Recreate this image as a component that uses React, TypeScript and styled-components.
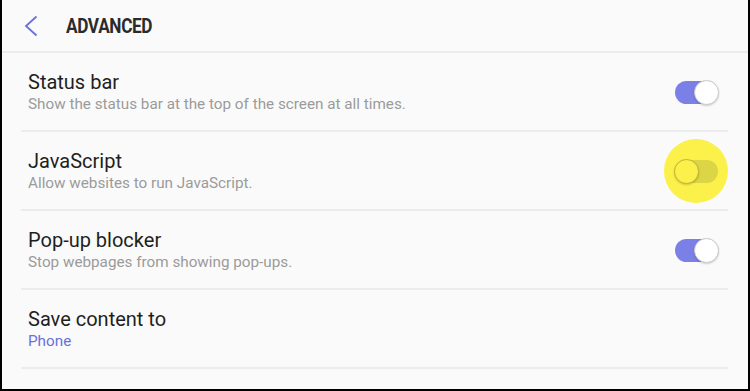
import styled, { createGlobalStyle } from "styled-components";

const GlobalStyle = createGlobalStyle`
  html, body {
    margin: 0;
    padding: 0;
    background: #ffffff;
  }
  * {
    box-sizing: border-box;
  }
`;

const Frame = styled.div`
  width: 750px;
  height: 391px;
  overflow: hidden;
  background-color: #fafafa;
  border-left: 2px solid #000;
  border-right: 2px solid #000;
  border-bottom: 2px solid #000;
  font-family: Roboto, "Noto Sans", sans-serif;
`;

const Header = styled.div`
  display: flex;
  align-items: center;
  height: 53px;
  padding-left: 21px;
  border-bottom: 2px solid #ececec;
`;

const BackButton = styled.button`
  display: flex;
  align-items: center;
  justify-content: center;
  width: 16px;
  height: 22px;
  padding: 0;
  margin: 0 27px 0 0;
  border: none;
  background: none;
`;

const Title = styled.h1`
  margin: 0;
  font-size: 20px;
  font-weight: 700;
  color: #2b2b2b;
  letter-spacing: -0.4px;
  transform: scaleX(0.86);
  transform-origin: left center;
`;

const List = styled.ul`
  list-style: none;
  margin: 0 20px 0 19px;
  padding: 0;
`;

const Row = styled.li`
  display: flex;
  align-items: center;
  justify-content: space-between;
  padding: 17px 10px 16px 7px;
  border-bottom: 2px solid #ececec;
`;

const Texts = styled.div`
  display: flex;
  flex-direction: column;
`;

const RowTitle = styled.div`
  font-size: 20px;
  line-height: 24px;
  color: #1f1f1f;
`;

const RowSub = styled.div<{ $accent?: boolean }>`
  font-size: 15.25px;
  line-height: 20px;
  color: ${(p) => (p.$accent ? "#6b6fdc" : "#9b9b9b")};
`;

const Highlight = styled.div`
  display: flex;
  align-items: center;
  justify-content: center;
  width: 64px;
  height: 64px;
  margin: -20px -10px -20px 0;
  border-radius: 50%;
  background-color: #fbf14a;
`;

const Track = styled.div<{ $on: boolean; $marked?: boolean }>`
  position: relative;
  width: 43px;
  height: 23px;
  border-radius: 12px;
  background-color: ${(p) =>
    p.$on ? "#7b80e6" : p.$marked ? "#dcd545" : "#d0d0d0"};
`;

const Knob = styled.div<{ $on: boolean; $marked?: boolean }>`
  position: absolute;
  top: -1px;
  ${(p) => (p.$on ? "right: -1px;" : "left: -1px;")}
  width: 25px;
  height: 25px;
  border-radius: 50%;
  background-color: ${(p) => (p.$marked ? "#fbf14a" : "#ffffff")};
  border: 1px solid ${(p) => (p.$marked ? "#bdb53a" : "#c9c9c9")};
  box-shadow: 0 1px 2px rgba(0, 0, 0, 0.18);
`;

const Toggle = ({ on, marked }: { on: boolean; marked?: boolean }) => (
  <Track $on={on} $marked={marked}>
    <Knob $on={on} $marked={marked} />
  </Track>
);

interface Setting {
  title: string;
  sub?: string;
  accent?: boolean;
  toggle?: boolean;
  marked?: boolean;
}

const settings: Setting[] = [
  {
    title: "Status bar",
    sub: "Show the status bar at the top of the screen at all times.",
    toggle: true,
  },
  {
    title: "JavaScript",
    sub: "Allow websites to run JavaScript.",
    toggle: false,
    marked: true,
  },
  {
    title: "Pop-up blocker",
    sub: "Stop webpages from showing pop-ups.",
    toggle: true,
  },
  { title: "Save content to", sub: "Phone", accent: true },
  { title: "Manage website data", sub: "Delete data saved by websites." },
];

export default function App() {
  return (
    <>
      <GlobalStyle />
      <Frame>
        <Header>
          <BackButton aria-label="Back">
            <svg width="14" height="22" viewBox="0 0 14 22">
              <path
                d="M12.5 1.5 L2 11 L12.5 20.5"
                fill="none"
                stroke="#6b6fdc"
                strokeWidth="1.8"
              />
            </svg>
          </BackButton>
          <Title>ADVANCED</Title>
        </Header>
        <List>
          {settings.map((s) => (
            <Row key={s.title}>
              <Texts>
                <RowTitle>{s.title}</RowTitle>
                {s.sub ? <RowSub $accent={s.accent}>{s.sub}</RowSub> : null}
              </Texts>
              {s.toggle !== undefined ? (
                s.marked ? (
                  <Highlight>
                    <Toggle on={s.toggle} marked />
                  </Highlight>
                ) : (
                  <Toggle on={s.toggle} />
                )
              ) : null}
            </Row>
          ))}
        </List>
      </Frame>
    </>
  );
}
